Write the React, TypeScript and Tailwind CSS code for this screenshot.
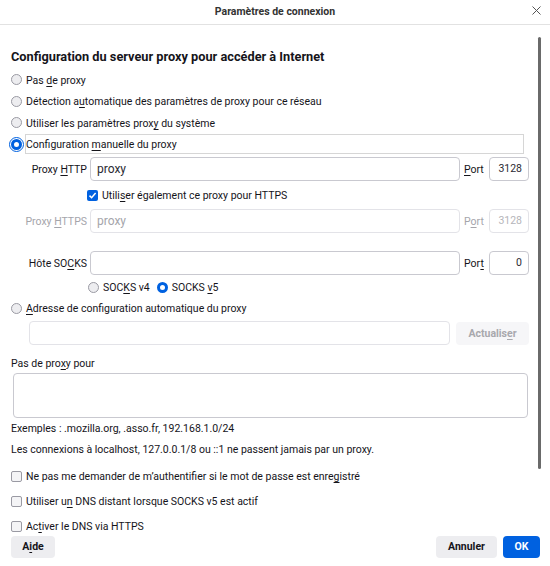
import React from "react";

function Radio({ checked, focused }: { checked?: boolean; focused?: boolean }) {
  if (checked) {
    return (
      <span
        className={`block w-[11px] h-[11px] shrink-0 rounded-full border-[3px] border-[#0061e0] bg-white ${
          focused ? "outline outline-[1.5px] outline-[#0061e0] outline-offset-[1px]" : ""
        }`}
      />
    );
  }
  return <span className="block w-[11px] h-[11px] shrink-0 rounded-full border border-[#9a9aa3] bg-[#ededf0]" />;
}

function Checkbox({ checked }: { checked?: boolean }) {
  if (checked) {
    return (
      <span className="flex items-center justify-center w-[11px] h-[11px] shrink-0 rounded-[2px] bg-[#0061e0]">
        <svg width="9" height="9" viewBox="0 0 9 9">
          <path d="M1.5 4.6 L3.6 6.7 L7.6 2" fill="none" stroke="white" strokeWidth="1.5" />
        </svg>
      </span>
    );
  }
  return <span className="block w-[11px] h-[11px] shrink-0 rounded-[2px] border border-[#9a9aa3] bg-[#f4f4f6]" />;
}

function U({ children }: { children: React.ReactNode }) {
  return <span className="underline underline-offset-[2px] decoration-[1px]">{children}</span>;
}

// text nudged down a hair so it sits like the reference font
function T({ children, className = "" }: { children: React.ReactNode; className?: string }) {
  return <span className={`pt-[2px] ${className}`}>{children}</span>;
}

function ProxyRow({
  label,
  value,
  port,
  portLabel,
  disabled,
}: {
  label: React.ReactNode;
  value: string;
  port: string;
  portLabel: React.ReactNode;
  disabled?: boolean;
}) {
  const muted = disabled ? "text-[#a5a5ab]" : "";
  const border = disabled ? "border-[#e3e3e8]" : "border-[#c9c9d0]";
  return (
    <div className="flex items-center h-[24px]">
      <div className={`w-[79px] pr-[3px] pt-[2px] text-right shrink-0 ${muted}`}>{label}</div>
      <div
        className={`flex-1 h-[24px] rounded-[4px] border ${border} flex items-center px-[6px] text-[12px] ${
          disabled ? "text-[#a5a5ab]" : "text-[#2b2a33]"
        }`}
      >
        {value}
      </div>
      <div className={`w-[22px] ml-[4px] mr-[3px] pt-[2px] shrink-0 ${muted}`}>{portLabel}</div>
      <div
        className={`w-[40px] h-[24px] shrink-0 rounded-[4px] border ${border} flex items-center justify-end pr-[6px] ${
          disabled ? "text-[#b5b5ba]" : "text-[#2b2a33]"
        }`}
      >
        {port}
      </div>
    </div>
  );
}

export default function App() {
  return (
    <div className="w-[550px] h-[566px] bg-white flex flex-col overflow-hidden text-[#15141a] text-[10.5px] font-['Roboto','Liberation_Sans',sans-serif]">
      {/* Title bar */}
      <div className="relative h-[25px] shrink-0 border-b border-[#e2e2e2] flex items-center justify-center">
        <span className="font-bold text-[10.5px] text-[#333]">Paramètres de connexion</span>
        <svg className="absolute right-[9px] top-[6px]" width="9" height="9" viewBox="0 0 9 9">
          <path d="M0.5 0.5 L8.5 8.5 M8.5 0.5 L0.5 8.5" stroke="#555" strokeWidth="1" />
        </svg>
      </div>

      {/* Scrollable content */}
      <div className="relative h-[508px] shrink-0 overflow-hidden pl-[11px] pr-[21px]">
        <div className="absolute left-[538px] top-[12px] w-[3px] h-[432px] rounded-full bg-[#6a6a6a]" />

        <div className="mt-[22px] h-[20px] flex items-center text-[12.75px] font-bold">
          Configuration du serveur proxy pour accéder à Internet
        </div>

        <div className="mt-[2px]">
          <div className="flex items-center h-[21.5px] gap-[4px]">
            <Radio />
            <T>
              Pas <U>d</U>e proxy
            </T>
          </div>
          <div className="flex items-center h-[21.5px] gap-[4px]">
            <Radio />
            <T>
              Détection a<U>u</U>tomatique des paramètres de proxy pour ce réseau
            </T>
          </div>
          <div className="flex items-center h-[21.5px] gap-[4px]">
            <Radio />
            <T>
              Utiliser les paramètres prox<U>y</U> du système
            </T>
          </div>
          <div className="flex items-center h-[21.5px] gap-[3px]">
            <Radio checked focused />
            <div className="flex-1 mr-[5px] h-[20px] border border-[#d6d6d6] flex items-center">
              <T>
                Configuration <U>m</U>anuelle du proxy
              </T>
            </div>
          </div>
        </div>

        <div className="mt-[2px]">
          <ProxyRow
            label={
              <>
                Proxy <U>H</U>TTP
              </>
            }
            value="proxy"
            port="3128"
            portLabel={
              <>
                <U>P</U>ort
              </>
            }
          />
        </div>

        <div className="mt-[4px] h-[20px] flex items-center gap-[4px] ml-[76px]">
          <Checkbox checked />
          <T>
            Utili<U>s</U>er également ce proxy pour HTTPS
          </T>
        </div>

        <div className="mt-[4px]">
          <ProxyRow
            label={
              <>
                Proxy <U>H</U>TTPS
              </>
            }
            value="proxy"
            port="3128"
            portLabel={
              <>
                P<U>o</U>rt
              </>
            }
            disabled
          />
        </div>

        <div className="mt-[18px]">
          <ProxyRow
            label={
              <>
                Hôte SO<U>C</U>KS
              </>
            }
            value=""
            port="0"
            portLabel={
              <>
                Por<U>t</U>
              </>
            }
          />
        </div>

        <div className="mt-[2px] h-[20px] flex items-center ml-[77px]">
          <Radio />
          <T className="ml-[4px]">
            SOC<U>K</U>S v4
          </T>
          <span className="ml-[7px]">
            <Radio checked />
          </span>
          <T className="ml-[4px]">
            SOCKS <U>v</U>5
          </T>
        </div>

        <div className="mt-[1px] h-[20px] flex items-center gap-[4px]">
          <Radio />
          <T>
            <U>A</U>dresse de configuration automatique du proxy
          </T>
        </div>

        <div className="mt-[3px] flex items-center ml-[18px]">
          <div className="w-[421px] h-[24px] rounded-[4px] border border-[#e3e3e8]" />
          <div className="ml-[6px] flex-1 h-[23px] rounded-[4px] bg-[#f6f6f8] flex items-center justify-center font-bold text-[#a8a8ad]">
            <T>
              Actualis<U>e</U>r
            </T>
          </div>
        </div>

        <div className="mt-[8px] h-[20px] flex items-center">
          <T>
            Pas de pro<U>x</U>y pour
          </T>
        </div>
        <div className="ml-[2px] mr-[1px] h-[45px] rounded-[4px] border border-[#c9c9d0]" />

        <div className="h-[20px] flex items-center">
          <T>Exemples : .mozilla.org, .asso.fr, 192.168.1.0/24</T>
        </div>
        <div className="mt-[1px] h-[20px] flex items-center">
          <T>Les connexions à localhost, 127.0.0.1/8 ou ::1 ne passent jamais par un proxy.</T>
        </div>

        <div className="mt-[7px] h-[20px] flex items-center gap-[4px]">
          <Checkbox />
          <T>
            Ne pas me demander de m’authentifier si le mot de passe est enre<U>g</U>istré
          </T>
        </div>
        <div className="mt-[5px] h-[20px] flex items-center gap-[4px]">
          <Checkbox />
          <T>
            Utiliser u<U>n</U> DNS distant lorsque SOCKS v5 est actif
          </T>
        </div>
        <div className="mt-[5px] h-[20px] flex items-center gap-[4px]">
          <Checkbox />
          <T>
            Ac<U>t</U>iver le DNS via HTTPS
          </T>
        </div>
      </div>

      {/* Footer */}
      <div className="flex-1 flex items-start justify-between pl-[11px] pr-[10px] pt-[3px]">
        <button className="w-[44px] h-[22px] rounded-[4px] bg-[#ededf0] font-bold text-[#15141a]">
          A<U>i</U>de
        </button>
        <div className="flex gap-[6px]">
          <button className="w-[61px] h-[22px] rounded-[4px] bg-[#ededf0] font-bold text-[#15141a]">Annuler</button>
          <button className="w-[37px] h-[22px] rounded-[4px] bg-[#0061e0] font-bold text-white">OK</button>
        </div>
      </div>
    </div>
  );
}
